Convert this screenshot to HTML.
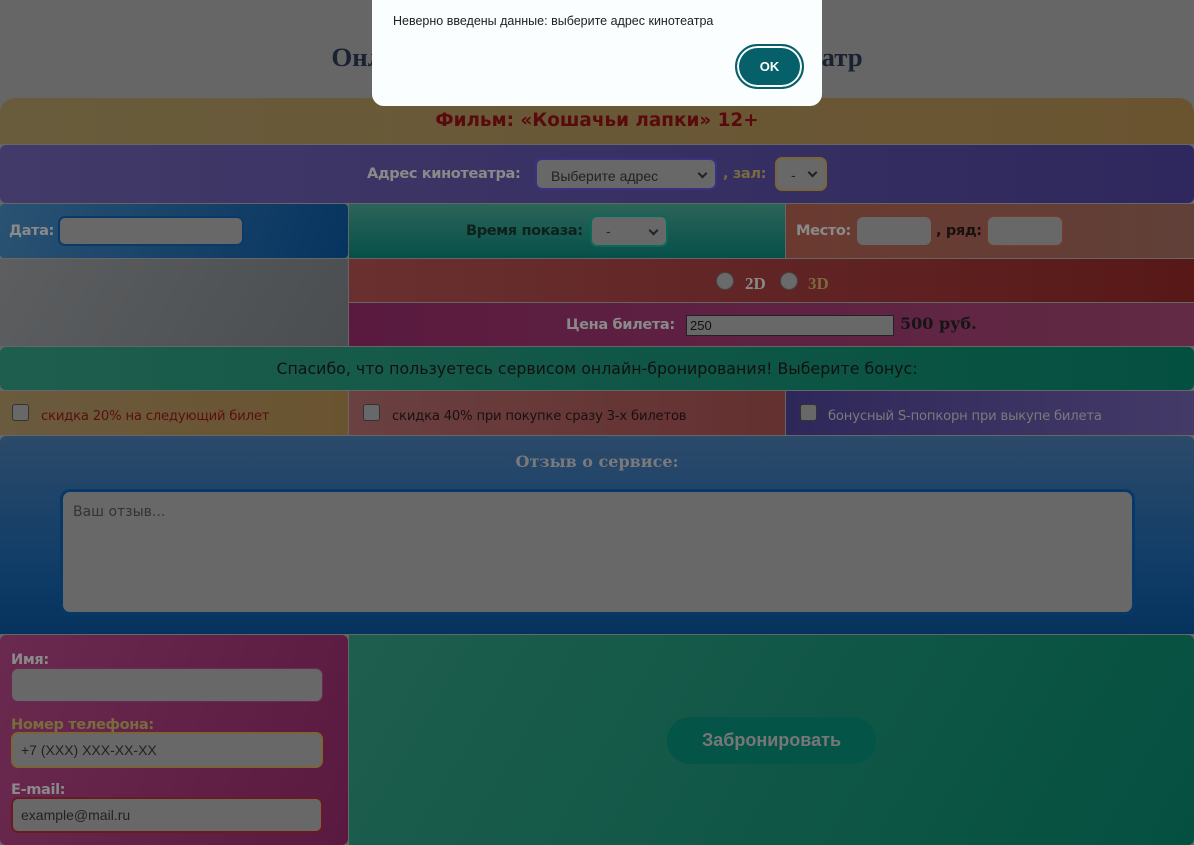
<!DOCTYPE html>
<html><head><meta charset="utf-8"><style>
*{box-sizing:border-box;margin:0;padding:0}
body{width:1194px;height:845px;background:#666;position:relative;overflow:hidden;font-family:"DejaVu Sans","Liberation Sans",sans-serif}
.a{position:absolute}
.lb{font-weight:bold;font-size:14.6px;color:#8a8a8a;letter-spacing:-0.4px}
.sel{position:absolute;background:#686868;border-radius:7px;font-family:"Liberation Sans",sans-serif;font-size:14px;color:#222;padding-left:14px;line-height:28px}
.sel:after{content:"";position:absolute;right:9px;top:10px;width:5px;height:5px;border-right:2px solid #222;border-bottom:2px solid #222;transform:rotate(45deg)}
.inp{position:absolute;background:#686868;border-radius:7px}
.cb{position:absolute;width:17px;height:17px;background:#686868;border:1px solid #333;border-radius:3px}
.bt{font-size:13.2px;letter-spacing:-0.2px}
</style></head><body>
<div class="a" style="left:0;top:42px;width:1194px;text-align:center;font-family:'Liberation Serif',serif;font-weight:bold;font-size:26.8px;color:#1a2232">Онлайн-бронирование билетов в кинотеатр</div>

<div class="a" style="left:0;top:98px;width:1194px;height:46px;border-radius:15px 15px 0 0;background:linear-gradient(90deg,#685c3c,#6a5430);text-align:center;line-height:46px;font-weight:bold;font-size:18.4px;color:#580a0c">Фильм: «Кошачьи лапки» 12+</div>

<div class="a" style="left:0;top:145px;width:1194px;height:58px;border-radius:6px;background:linear-gradient(90deg,#423a68,#2e285e)"></div>
<div class="a lb" style="left:367px;top:165px">Адрес кинотеатра:</div>
<div class="sel" style="left:535px;top:158px;width:182px;height:32px;line-height:32px;border:2px solid #3a3280">Выберите адрес</div>
<div class="a lb" style="left:723px;top:165px;color:#7a6a40">, зал:</div>
<div class="sel" style="left:775px;top:157px;width:52px;height:34px;line-height:32px;border:2px solid #7a6438">-</div>

<div class="a" style="left:0;top:204px;width:348px;height:54px;border-radius:4px;background:linear-gradient(110deg,#2a5272,#063460)"></div>
<div class="a lb" style="left:9px;top:222px">Дата:</div>
<div class="inp" style="left:58px;top:216px;width:186px;height:30px;border:2px solid #0a3a6a"></div>
<div class="a" style="left:349px;top:204px;width:436px;height:54px;background:linear-gradient(180deg,#2c6458,#05504a)"></div>
<div class="a lb" style="left:466px;top:222px;color:#0e221c">Время показа:</div>
<div class="sel" style="left:590px;top:215px;width:78px;height:32px;border:2px solid #0a6a58">-</div>
<div class="a" style="left:786px;top:204px;width:408px;height:54px;background:linear-gradient(90deg,#6a3a30,#604038)"></div>
<div class="a lb" style="left:796px;top:222px">Место:</div>
<div class="inp" style="left:856px;top:216px;width:76px;height:30px;border:1px solid #6a3a30"></div>
<div class="a lb" style="left:936px;top:222px;color:#1a1010">, ряд:</div>
<div class="inp" style="left:987px;top:216px;width:76px;height:30px;border:1px solid #7a3a30"></div>

<div class="a" style="left:0;top:259px;width:348px;height:87px;background:linear-gradient(120deg,#5c5e60,#4a4e50)"></div>
<div class="a" style="left:349px;top:259px;width:845px;height:43px;background:linear-gradient(90deg,#6a3030,#581818)"></div>
<div class="a" style="left:716px;top:272px;width:18px;height:18px;border-radius:50%;background:#6a6a6a;border:1px solid #444"></div>
<div class="a" style="left:745px;top:274px;font-family:'Liberation Serif',serif;font-weight:bold;font-size:17px;color:#8a8a8a">2D</div>
<div class="a" style="left:780px;top:272px;width:18px;height:18px;border-radius:50%;background:#6a6a6a;border:1px solid #444"></div>
<div class="a" style="left:808px;top:274px;font-family:'Liberation Serif',serif;font-weight:bold;font-size:17px;color:#7a6a40">3D</div>
<div class="a" style="left:349px;top:303px;width:845px;height:43px;background:linear-gradient(90deg,#5a1a40,#622a44)"></div>
<div class="a lb" style="left:566px;top:316px">Цена билета:</div>
<div class="a" style="left:686px;top:315px;width:208px;height:21px;background:#686868;border:1px solid #222;font-family:'Liberation Sans',sans-serif;font-size:13px;padding-left:3px;line-height:19px;color:#111">250</div>
<div class="a" style="left:900px;top:314px;font-family:'DejaVu Serif',serif;font-weight:bold;font-size:16px;color:#151515">500 руб.</div>

<div class="a" style="left:0;top:347px;width:1194px;height:43px;border-radius:6px;background:linear-gradient(90deg,#1e5e4e,#045040);text-align:center;line-height:44px;font-size:15.8px;color:#111">Спасибо, что пользуетесь сервисом онлайн-бронирования! Выберите бонус:</div>

<div class="a" style="left:0;top:391px;width:348px;height:44px;background:linear-gradient(90deg,#6a5a3e,#6a5430)"></div>
<div class="cb" style="left:12px;top:404px"></div>
<div class="a bt" style="left:41px;top:409px;color:#5a0f0f">скидка 20% на следующий билет</div>
<div class="a" style="left:349px;top:391px;width:436px;height:44px;background:linear-gradient(90deg,#6a4040,#643030)"></div>
<div class="cb" style="left:363px;top:404px"></div>
<div class="a bt" style="left:392px;top:409px;color:#1a1010">скидка 40% при покупке сразу 3-х билетов</div>
<div class="a" style="left:786px;top:391px;width:408px;height:44px;background:linear-gradient(90deg,#2e285a,#443a68)"></div>
<div class="cb" style="left:800px;top:404px"></div>
<div class="a bt" style="left:828px;top:409px;color:#7a7a7a">бонусный S-попкорн при выкупе билета</div>

<div class="a" style="left:0;top:436px;width:1194px;height:198px;border-radius:6px 6px 0 0;background:linear-gradient(180deg,#2c4a6a,#123e68 60%,#05335e)"></div>
<div class="a" style="left:0;top:452px;width:1194px;text-align:center;font-family:'DejaVu Serif',serif;font-weight:bold;font-size:16px;color:#7a7a7a">Отзыв о сервисе:</div>
<div class="a" style="left:60px;top:489px;width:1075px;height:126px;background:#686868;border:3px solid #073868;border-radius:10px;padding:12px 10px;font-size:14px;color:#333">Ваш отзыв...</div>

<div class="a" style="left:0;top:635px;width:348px;height:210px;border-radius:6px;background:linear-gradient(110deg,#6a2a50,#5a1a40)"></div>
<div class="a lb" style="left:11px;top:651px">Имя:</div>
<div class="inp" style="left:11px;top:668px;width:312px;height:34px;border:1px solid #6a2a50"></div>
<div class="a lb" style="left:11px;top:716px;color:#7a6a40">Номер телефона:</div>
<div class="inp" style="left:11px;top:732px;width:312px;height:36px;border:2px solid #7a6438;font-family:'Liberation Sans',sans-serif;font-size:14px;color:#222;padding-left:8px;line-height:32px">+7 (XXX) XXX-XX-XX</div>
<div class="a lb" style="left:11px;top:781px">E-mail:</div>
<div class="inp" style="left:11px;top:797px;width:312px;height:36px;border:2px solid #6a1a20;font-family:'Liberation Sans',sans-serif;font-size:14px;color:#222;padding-left:8px;line-height:32px">example@mail.ru</div>
<div class="a" style="left:349px;top:635px;width:845px;height:210px;border-radius:0 6px 6px 0;background:linear-gradient(120deg,#1e5e4e,#045040)"></div>
<div class="a" style="left:667px;top:717px;width:209px;height:47px;border-radius:24px;background:#055448;text-align:center;line-height:47px;font-family:'Liberation Sans',sans-serif;font-weight:bold;font-size:18px;color:#777">Забронировать</div>

<div class="a" style="left:372px;top:-10px;width:450px;height:116px;background:#fafefe;border-radius:0 0 12px 12px"></div>
<div class="a" style="left:393px;top:14px;font-family:'Liberation Sans',sans-serif;font-size:12.5px;color:#222">Неверно введены данные: выберите адрес кинотеатра</div>
<div class="a" style="left:735px;top:44px;width:69px;height:45px;border-radius:23px;background:#06606a;border:2px solid #06606a;box-shadow:inset 0 0 0 2px #fff;text-align:center;line-height:41px;font-family:'Liberation Sans',sans-serif;font-weight:bold;font-size:13px;color:#fff">OK</div>
</body></html>
